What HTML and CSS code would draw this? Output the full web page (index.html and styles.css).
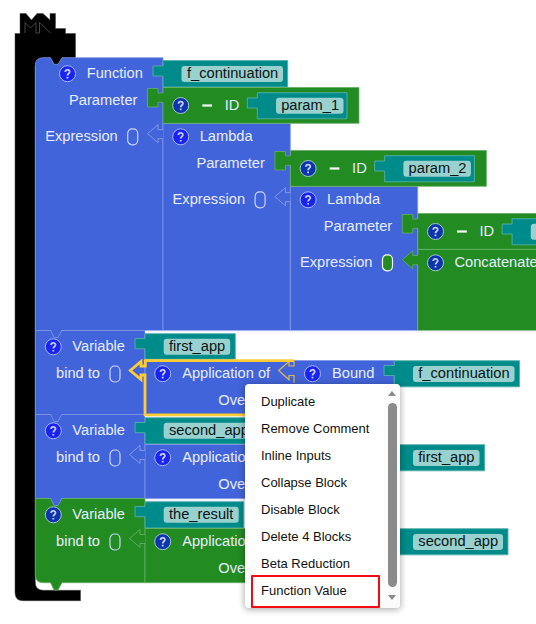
FILE: index.html
```html
<!DOCTYPE html>
<html lang="en">
<head>
<meta charset="utf-8">
<title>Block workspace</title>
<link rel="stylesheet" href="styles.css">
</head>
<body>
<main class="workspace">
<svg class="canvas" width="536" height="624" viewBox="0 0 536 624">
  <defs>
    <g id="help">
      <circle r="8"/>
      <path class="q" d="M-2.2-1.8C-2.2-4.6 2.2-4.6 2.2-2C2.2-.2 0-.2 0 1.7M0 3.1V4.7"/>
    </g>
    <rect id="cup" width="10" height="16" rx="4.5"/>
    <path id="socket" d="M0 6H-5V1L-15.5 10L-5 19V15H0"/>
  </defs>

  <!-- main block -->
  <path class="main" d="M20 33.5V13.5H26L31.5 20L37 13.5H43L50 20V13.5H55.5V28.5H65.5V33.5H75.5V66H35.3V582Q35.3 590.3 43.3 590.3H80.5V600.7H23Q15 600.7 15 592.7V33.5Z"/>
  <path class="logo" d="M25 33V22.5L30.5 28L36 22.5V33H39.5V22.5L50.5 33"/>

  <!-- function block -->
  <path class="blue" d="M35.3 330.5V65.5Q35.3 57.7 43.3 57.7H50.5L54 64.3H58L62 57.7H163V330.5Z"/>
  <use href="#help" class="help" x="67.5" y="73.7"/>
  <text class="label" x="86.7" y="78.4">Function</text>
  <path class="teal" d="M163 60.5H287.7V87H163V76H153V66H163Z"/>
  <rect class="field" x="181.5" y="66" width="101.5" height="16" rx="3"/>
  <text class="value" x="187" y="78.4">f_continuation</text>

  <g>
    <path class="blue" d="M163 123.5H290.3V330.5H163Z"/>
    <text class="label" x="69" y="105.4">Parameter</text>
    <text class="label" x="45.2" y="141.4">Expression</text>
    <use href="#cup" class="cup" x="127.7" y="128.8"/>
    <use href="#socket" class="socket" x="163" y="123.7"/>
    <path class="green" d="M163 87.5H359V123.3H163V102.3H158V107H147.5V88.5H158V93H163Z"/>
    <use href="#help" class="help dark" x="180.7" y="105.5"/>
    <path class="minus" d="M202.3 105.5H212"/>
    <text class="label" x="224.7" y="110.4">ID</text>
    <path class="teal" d="M257.3 92.7H347V118.8H257.3V108H247.3V98H257.3Z"/>
    <rect class="field" x="276" y="97.8" width="67.5" height="16" rx="3"/>
    <text class="value" x="281.2" y="110.4">param_1</text>
    <use href="#help" class="help" x="180.7" y="136.8"/>
    <text class="label" x="199.7" y="141.4">Lambda</text>
  </g>

  <g transform="translate(127.4 63)">
    <path class="blue" d="M163 123.5H290.3V267.5H163Z"/>
    <text class="label" x="69" y="105.4">Parameter</text>
    <text class="label" x="45.2" y="141.4">Expression</text>
    <use href="#cup" class="cup" x="127.7" y="128.8"/>
    <use href="#socket" class="socket" x="163" y="123.7"/>
    <path class="green" d="M163 87.5H359V123.3H163V102.3H158V107H147.5V88.5H158V93H163Z"/>
    <use href="#help" class="help dark" x="180.7" y="105.5"/>
    <path class="minus" d="M202.3 105.5H212"/>
    <text class="label" x="224.7" y="110.4">ID</text>
    <path class="teal" d="M257.3 92.7H347V118.8H257.3V108H247.3V98H257.3Z"/>
    <rect class="field" x="276" y="97.8" width="67.5" height="16" rx="3"/>
    <text class="value" x="281.2" y="110.4">param_2</text>
    <use href="#help" class="help" x="180.7" y="136.8"/>
    <text class="label" x="199.7" y="141.4">Lambda</text>
  </g>

  <g transform="translate(254.8 126)">
    <path class="green" d="M163 123.5H290.3V204.5H163V138.7H158V143L147.5 133.7L158 124.7V129.5H163Z"/>
    <text class="label" x="69" y="105.4">Parameter</text>
    <text class="label" x="45.2" y="141.4">Expression</text>
    <use href="#cup" class="cup filled" x="127.7" y="128.8"/>
    <path class="green" d="M163 87.5H359V123.3H163V102.3H158V107H147.5V88.5H158V93H163Z"/>
    <use href="#help" class="help dark" x="180.7" y="105.5"/>
    <path class="minus" d="M202.3 105.5H212"/>
    <text class="label" x="224.7" y="110.4">ID</text>
    <path class="teal" d="M257.3 92.7H347V118.8H257.3V108H247.3V98H257.3Z"/>
    <rect class="field" x="276" y="97.8" width="67.5" height="16" rx="3"/>
    <use href="#help" class="help dark" x="180.7" y="136.8"/>
    <text class="label" x="199.7" y="141.4">Concatenate</text>
  </g>

  <!-- first_app -->
  <path class="blue" d="M35.3 330.5H145V414.5H35.3Z"/>
  <path class="blue seam" d="M50.5 330L54 337.5H58L62 330"/>
  <path class="rim" d="M145 331.8H536"/>
  <use href="#help" class="help" x="53.3" y="346.8"/>
  <text class="label" x="72.3" y="351.4">Variable</text>
  <text class="label" x="56" y="378.4">bind to</text>
  <use href="#cup" class="cup" x="110" y="366"/>
  <path class="teal" d="M145 333.7H235.3V359.3H145V348.7H135V338.5H145Z"/>
  <rect class="field" x="163.7" y="338.8" width="66.5" height="16" rx="3"/>
  <text class="value" x="169" y="351.4">first_app</text>
  <path class="blue" d="M145 360.5H394.3V414.5H145Z"/>
  <use href="#help" class="help" x="162.7" y="373.7"/>
  <text class="label" x="182.2" y="378.4">Application of</text>
  <text class="label" x="218.3" y="405.4">Over</text>
  <path class="selected-socket" d="M289 360.5V366M294 360.5V366H289V361.5L278.7 370.5L289 379.8V375.5H294V383"/>
  <use href="#help" class="help" x="312.5" y="373.7"/>
  <text class="label" x="332" y="378.4">Bound</text>
  <path class="teal" d="M394.3 360.7H519.5V386.8H394.3V375.5H384V365.5H394.3Z"/>
  <rect class="field" x="413" y="366" width="101.5" height="16" rx="3"/>
  <text class="value" x="418.3" y="378.4">f_continuation</text>

  <!-- second_app -->
  <path class="blue" d="M35.3 414.5H145V498.5H35.3Z"/>
  <path class="blue seam" d="M50.5 414L54 421.5H58L62 414"/>
  <path class="rim" d="M145 416.3H246"/>
  <use href="#help" class="help" x="53.3" y="430.8"/>
  <text class="label" x="72.3" y="435.4">Variable</text>
  <text class="label" x="56" y="462.4">bind to</text>
  <use href="#cup" class="cup" x="110" y="450"/>
  <path class="teal" d="M145 417.7H260V444H145V432.7H135V422.5H145Z"/>
  <rect class="field" x="163.7" y="422.8" width="90" height="16" rx="3"/>
  <text class="value" x="169" y="435.4">second_app</text>
  <path class="blue" d="M145 444.5H394.3V498.5H145Z"/>
  <use href="#socket" class="socket" x="145" y="444.5"/>
  <use href="#help" class="help" x="162.7" y="457.7"/>
  <text class="label" x="182.2" y="462.4">Application of</text>
  <text class="label" x="218.3" y="489.4">Over</text>
  <path class="teal" d="M394.3 444.7H484.7V470.8H394.3Z"/>
  <rect class="field" x="413" y="450" width="66.5" height="16" rx="3"/>
  <text class="value" x="418.3" y="462.4">first_app</text>

  <!-- the_result -->
  <path class="green" d="M35.3 498.5H145V582.7H62L58 590H54L50.5 582.7H43.3Q35.3 582.7 35.3 574.7Z"/>
  <path class="blue seam" d="M50.5 498L54 505.5H58L62 498"/>
  <path class="rim" d="M145 500H246"/>
  <use href="#help" class="help dark" x="53.3" y="514.8"/>
  <text class="label" x="72.3" y="519.4">Variable</text>
  <text class="label" x="56" y="546.4">bind to</text>
  <use href="#cup" class="cup" x="110" y="534"/>
  <path class="teal" d="M145 501.7H243.7V528H145V516.7H135V506.5H145Z"/>
  <rect class="field" x="163.7" y="506.8" width="75" height="16" rx="3"/>
  <text class="value" x="169" y="519.4">the_result</text>
  <path class="green" d="M145 528.5H394.3V582.7H145Z"/>
  <use href="#socket" class="socket green-socket" x="145" y="528.5"/>
  <use href="#help" class="help dark" x="162.7" y="541.7"/>
  <text class="label" x="182.2" y="546.4">Application of</text>
  <text class="label" x="218.3" y="573.4">Over</text>
  <path class="teal" d="M394.3 528.7H508V554.8H394.3Z"/>
  <rect class="field" x="413" y="534" width="90" height="16" rx="3"/>
  <text class="value" x="418.3" y="546.4">second_app</text>

  <!-- selection outline -->
  <path class="selected" d="M294 360.6H145.3V366H141V361.5L130.3 370.5L141 379.5V375H145V414.8H294"/>
</svg>

<div class="menu">
  <ul class="items">
    <li>Duplicate</li>
    <li>Remove Comment</li>
    <li>Inline Inputs</li>
    <li>Collapse Block</li>
    <li>Disable Block</li>
    <li>Delete 4 Blocks</li>
    <li>Beta Reduction</li>
    <li class="marked">Function Value</li>
  </ul>
  <div class="scrollbar">
    <span class="arrow up"></span>
    <span class="thumb"></span>
    <span class="arrow down"></span>
  </div>
</div>
</main>
</body>
</html>
```
FILE: styles.css
```css
body { margin: 0; background: #fff; font-family: "Liberation Sans", Arial, sans-serif; }
.workspace { position: relative; width: 536px; height: 624px; overflow: hidden; }
.canvas { display: block; }

.main { fill: #000; stroke: #444; stroke-width: .5; }
.logo { fill: none; stroke: #555; stroke-width: .8; }
.blue { fill: #4264da; stroke: #8195e5; stroke-width: .8; }
.green { fill: #228b22; stroke: #64ae64; stroke-width: .8; }
.teal { fill: #008b8b; stroke: #55b0aa; stroke-width: .9; }
.rim { fill: none; stroke: #f4f5fc; stroke-width: 2; }
.field { fill: #99d1cf; }
.label { fill: #e8edff; font-size: 14.67px; }
.value { fill: #0b1414; font-size: 14.67px; }
.cup { fill: none; stroke: #ccd5f8; stroke-width: 1.2; }
.cup.filled { fill: #228b22; stroke: #fff; }
.socket { fill: #4264da; stroke: #8b9de8; stroke-width: .9; }
.green-socket { fill: #228b22; stroke: #64ae64; }
.help { fill: #1a24f2; stroke: #a9b8f0; stroke-width: 1; }
.help.dark { fill: #0c34ac; stroke: #a8c8c8; }
.q { fill: none; stroke: #c3ccf5; stroke-width: 1.8; }
.minus { stroke: #fff; stroke-width: 2.2; }
.selected { fill: none; stroke: #fc3; stroke-width: 2.8; }
.selected-socket { fill: none; stroke: #e2b64c; stroke-width: 1.2; }

.menu {
  position: absolute; left: 245px; top: 384px; width: 155px; height: 224px;
  display: flex; background: #fff; border-radius: 4px;
  box-shadow: 0 1px 6px 1px rgba(0, 0, 0, .3);
}
.items { flex: 1; margin: 0; padding: 4px 4px 0 6px; list-style: none; }
.items li { height: 27px; padding-left: 10px; line-height: 27px; font-size: 13px; color: #111; white-space: nowrap; }
.items .marked {
  box-sizing: border-box; height: 33px; margin-top: -2px; padding-left: 8px;
  border: 2px solid #f50a14; line-height: 28px; border-radius: 1px;
}
.scrollbar {
  box-sizing: border-box; width: 16px; padding: 7px 0 8px; display: flex;
  flex-direction: column; align-items: center; background: #fbfbfb; border-radius: 0 4px 4px 0;
}
.arrow { width: 0; border: 4.5px solid transparent; }
.up { border-top: 0; border-bottom: 5px solid #8b8b8b; }
.down { border-bottom: 0; border-top: 5px solid #8b8b8b; }
.thumb { flex: 1; width: 9px; margin: 7px 0 8px; border-radius: 5px; background: #8b8b8b; }
```
